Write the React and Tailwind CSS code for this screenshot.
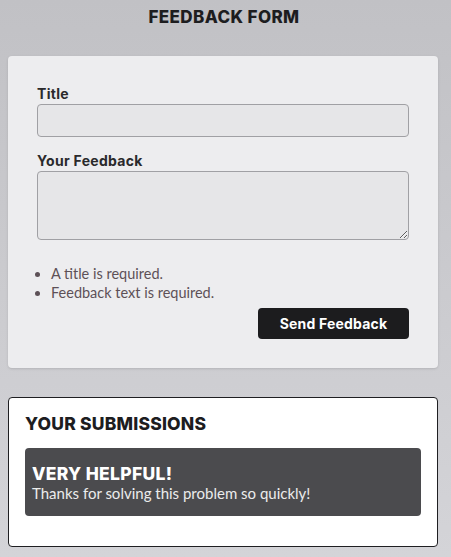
import React, { useState } from "react";

const heading = { fontFamily: "Inter, 'Noto Sans', sans-serif" };

const App = () => {
  const [title, setTitle] = useState("");
  const [text, setText] = useState("");
  const errors = [];
  if (!title.trim()) errors.push("A title is required.");
  if (!text.trim()) errors.push("Feedback text is required.");

  return (
    <div
      className="min-h-screen bg-gradient-to-b from-[#c1c1c5] to-[#d4d4d8] pb-2 pl-2 pr-[13px]"
      style={{ fontFamily: "Lato, 'Open Sans', sans-serif" }}
    >
      <h1
        className="pl-[2px] pt-[8px] text-center text-[17px] font-extrabold leading-[19px] tracking-[0.4px] text-[#1d1d1f]"
        style={heading}
      >
        FEEDBACK FORM
      </h1>

      <form
        className="mt-[29px] rounded-[4px] bg-[#ededef] px-[29px] pb-[29px] pt-[29px] shadow-sm"
        onSubmit={(e) => e.preventDefault()}
      >
        <label
          className="block text-[14px] font-bold leading-[18px] tracking-[0.3px] text-[#2a2a2c]"
          style={heading}
        >
          Title
        </label>
        <input
          value={title}
          onChange={(e) => setTitle(e.target.value)}
          className="mt-[1px] block h-[33px] w-full rounded-[4px] border border-[#a0a0a4] bg-[#e6e6e8] px-2 text-[14px] outline-none"
        />

        <label
          className="mt-[15px] block text-[14px] font-bold leading-[18px] tracking-[0.3px] text-[#2a2a2c]"
          style={heading}
        >
          Your Feedback
        </label>
        <textarea
          value={text}
          onChange={(e) => setText(e.target.value)}
          className="mt-[1px] block h-[69px] w-full rounded-[4px] border border-[#a0a0a4] bg-[#e6e6e8] px-2 py-1 text-[14px] outline-none"
        />

        <ul className="mt-[24px] list-disc pl-[14px] text-[14.5px] leading-[19px] text-[#5d5157]">
          {errors.map((err) => (
            <li key={err}>{err}</li>
          ))}
        </ul>

        <div className="mt-[6px] flex justify-end">
          <button
            type="submit"
            className="h-[31px] w-[151px] rounded-[4px] bg-[#1c1c1e] text-[14px] font-bold tracking-[0.2px] text-white"
            style={heading}
          >
            Send Feedback
          </button>
        </div>
      </form>

      <section className="mt-[29px] rounded-[4px] border border-[#1f1f22] bg-white px-4 pb-[30px] pt-[15px]">
        <h2
          className="text-[17.5px] font-extrabold leading-[22px] tracking-[0.2px] text-[#1d1d1f]"
          style={heading}
        >
          YOUR SUBMISSIONS
        </h2>
        <div className="mt-[13px] rounded-[4px] bg-[#4b4b4e] px-[7px] pb-[13px] pt-[16px] text-white">
          <h3
            className="text-[17.5px] font-extrabold leading-[20px] tracking-[0.3px]"
            style={heading}
          >
            VERY HELPFUL!
          </h3>
          <p className="text-[15px] leading-[19px] text-[#ececec]">
            Thanks for solving this problem so quickly!
          </p>
        </div>
      </section>
    </div>
  );
};

export default App;
